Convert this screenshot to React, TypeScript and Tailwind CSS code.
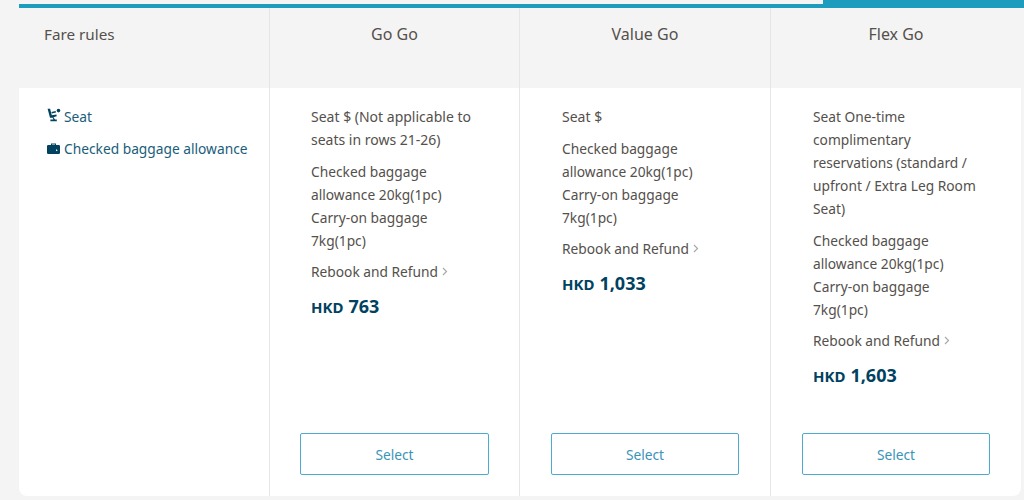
const Seat = () => (
  <svg width="14" height="15" viewBox="0 0 14 15" className="mb-[2px] shrink-0" fill="#00425f">
    <circle cx="11.500" cy="2.600" r="1.800" />
    <path d="M.6.800h2.500l1.700 6.500 4.600-.9.300 1.900-3.300.9 1.600 2.300h1.800v1.800H3.400v-1.800h3.100L5.600 9.700H3z" />
    <path d="M4.400 3.900l4.200-1 .4 1.600-4.100 1z" />
  </svg>
);
const Bag = () => (
  <svg width="13" height="14" viewBox="0 0 13 14" className="shrink-0" fill="#00425f">
    <path d="M4 3V1.500h5V3h2.700A1.300 1.300 0 0 1 13 4.300v6.500a1.300 1.300 0 0 1-1.300 1.300H1.300A1.300 1.300 0 0 1 0 10.800V4.300A1.300 1.300 0 0 1 1.300 3zm1-.5V3h3v-.5z" fillRule="evenodd" />
    <path d="M9 7.200l1.800 1L9 9.200z" fill="#ffffff" />
  </svg>
);

type Col = { name: string; seat: string; price: string; ml: string; btn: string; seatSize: string };
const cols: Col[] = [
  { name: "Go Go", seat: "Seat $ (Not applicable to seats in rows 21-26)", price: "763", ml: "ml-[41px]", btn: "ml-[30px] w-[189px]", seatSize: "text-[14px]" },
  { name: "Value Go", seat: "Seat $", price: "1,033", ml: "ml-[42px]", btn: "ml-[31px] w-[188px]", seatSize: "text-[14px]" },
  { name: "Flex Go", seat: "Seat One-time complimentary reservations (standard / upfront / Extra Leg Room Seat)", price: "1,603", ml: "ml-[42px]", btn: "ml-[31px] w-[188px]", seatSize: "text-[13.750px]" },
];

export default function App() {
  return (
    <div className="h-[500px] w-[1024px] overflow-hidden bg-[#f4f4f4] text-[13.750px] leading-[23px] text-[#54504c] font-['Noto_Sans','Open_Sans',sans-serif]">
      <div className="flex h-[8px] flex-col">
        <div className="ml-auto h-[4px] w-[201px] bg-[#1d9cbd]" />
        <div className="ml-[19px] h-[4px] bg-[#1d9cbd]" />
      </div>
      <div className="ml-[19px] mr-[3px] grid h-[488px] grid-cols-[251px_250px_251px_250px] grid-rows-[80px_1fr] overflow-hidden rounded-b-lg">
        <div className="border-r border-[#e6e6e6] pl-[25px] pt-[15px] text-[15.250px]">Fare rules</div>
        {cols.map((c, i) => (
          <div key={c.name} className={`pt-[15px] text-center text-[16px] ${i < 2 ? "border-r border-[#e6e6e6]" : ""}`}>
            {c.name}
          </div>
        ))}
        <div className="border-r border-[#e6e6e6] bg-white pl-[28px] pt-[17px] text-[#1a5d7a]">
          <div className="flex items-center gap-[3px]"><Seat /><span>Seat</span></div>
          <div className="mt-[9px] flex items-center gap-[4px]"><Bag /><span>Checked baggage allowance</span></div>
        </div>
        {cols.map((c, i) => (
          <div key={c.name} className={`flex flex-col bg-white pt-[17px] ${i < 2 ? "border-r border-[#e6e6e6]" : ""}`}>
            <div className={`w-[170px] ${c.ml}`}>
              <p className={c.seatSize}>{c.seat}</p>
              <p className="mt-[9px]">
                <span className="block">Checked baggage allowance 20kg(1pc)</span>
                <span className="block">Carry-on baggage 7kg(1pc)</span>
              </p>
              <p className="mt-[8px] flex items-center whitespace-nowrap">
                Rebook and Refund
                <svg width="6" height="9" viewBox="0 0 6 9" fill="none" stroke="#a9a9a9" strokeWidth="1.200" className="ml-[4px]"><path d="M1 1l3.500 3.500L1 8" /></svg>
              </p>
              <p className="mt-[12px] flex items-baseline gap-[5px] font-bold text-[#00425f]">
                <span className="text-[15px]">HKD</span>
                <span className="text-[18px]">{c.price}</span>
              </p>
            </div>
            <button className={`mb-[21px] mt-auto h-[42px] rounded-[2px] border border-[#4baccf] bg-white text-[#3a94b8] ${c.btn}`}>
              Select
            </button>
          </div>
        ))}
      </div>
    </div>
  );
}
